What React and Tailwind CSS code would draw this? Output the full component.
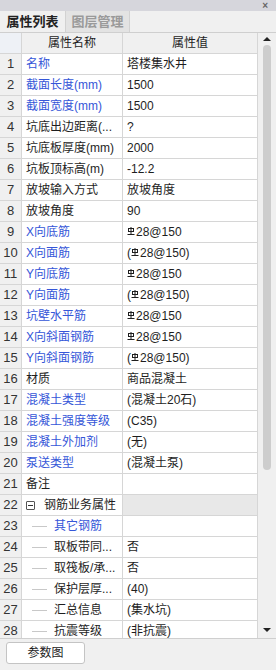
import React from 'react';

const BLUE = 'text-[#3556d8]';

// HRB400 rebar mark
const Rebar = () => (
  <svg width="8" height="8" viewBox="0 0 8 8" className="mb-[3px] mr-[1px] shrink-0">
    <rect x="1.5" y="1.5" width="5" height="3" fill="none" stroke="currentColor" strokeWidth="1" />
    <line x1="4" y1="0" x2="4" y2="7" stroke="currentColor" strokeWidth="1" />
    <line x1="0.5" y1="7.5" x2="7.5" y2="7.5" stroke="currentColor" strokeWidth="1" />
  </svg>
);

const bar = (wrap) => (
  <span className="flex items-center">
    {wrap && '('}
    <Rebar />28@150{wrap && ')'}
  </span>
);

const rows = [
  { name: '名称', value: '塔楼集水井', blue: true },
  { name: '截面长度(mm)', value: '1500', blue: true },
  { name: '截面宽度(mm)', value: '1500', blue: true },
  { name: '坑底出边距离(...', value: '?' },
  { name: '坑底板厚度(mm)', value: '2000' },
  { name: '坑板顶标高(m)', value: '-12.2' },
  { name: '放坡输入方式', value: '放坡角度' },
  { name: '放坡角度', value: '90' },
  { name: 'X向底筋', value: bar(false), blue: true },
  { name: 'X向面筋', value: bar(true), blue: true },
  { name: 'Y向底筋', value: bar(false), blue: true },
  { name: 'Y向面筋', value: bar(true), blue: true },
  { name: '坑壁水平筋', value: bar(false), blue: true },
  { name: 'X向斜面钢筋', value: bar(false), blue: true },
  { name: 'Y向斜面钢筋', value: bar(true), blue: true },
  { name: '材质', value: '商品混凝土' },
  { name: '混凝土类型', value: '(混凝土20石)', blue: true },
  { name: '混凝土强度等级', value: '(C35)', blue: true },
  { name: '混凝土外加剂', value: '(无)', blue: true },
  { name: '泵送类型', value: '(混凝土泵)', blue: true },
  { name: '备注', value: '' },
  { name: '钢筋业务属性', value: '', group: true },
  { name: '其它钢筋', value: '', child: true, blue: true },
  { name: '取板带同...', value: '否', child: true },
  { name: '取筏板/承...', value: '否', child: true },
  { name: '保护层厚...', value: '(40)', child: true },
  { name: '汇总信息', value: '(集水坑)', child: true },
  { name: '抗震等级', value: '(非抗震)', child: true },
];

export default function App() {
  return (
    <div
      className="w-[276px] h-[670px] bg-[#f0f0f0] flex flex-col overflow-hidden text-[12px] text-[#1e1e1e]"
      style={{ fontFamily: '"Liberation Sans", "Noto Sans CJK SC", sans-serif' }}
    >
      {/* title strip */}
      <div className="h-[11px] bg-[#d6d6dc] flex justify-end items-center pr-[8px]">
        <span className="text-[10px] leading-none text-[#666] font-bold">×</span>
      </div>

      {/* tabs */}
      <div className="h-[22px] flex border-b border-[#cfcfcf] bg-[#f0f0f0] text-[13px]">
        <div className="w-[65px] flex items-center justify-center font-bold text-[#222]">属性列表</div>
        <div className="w-[65px] flex items-center justify-center bg-[#e3e3e3] border-x border-[#d2d2d2] font-bold text-[#9a9a9a]">
          图层管理
        </div>
      </div>

      {/* grid */}
      <div className="flex h-[606px] bg-white border-b border-[#cfcfcf]">
        <div className="w-[258px] overflow-hidden">
          <div className="flex h-[21px] border-b border-[#d6d6d6] bg-[#f0f0f0]">
            <div className="w-[22px] bg-[#eef1f6] border-r border-[#d6d6d6]" />
            <div className="w-[101px] border-r border-[#d6d6d6] flex items-center justify-center">属性名称</div>
            <div className="flex-1 border-r border-[#d6d6d6] flex items-center justify-center">属性值</div>
          </div>
          {rows.map((r, i) => (
            <div key={i} className="flex h-[21px] border-b border-[#d6d6d6]">
              <div className="w-[22px] shrink-0 bg-[#f0f0f0] border-r border-[#d6d6d6] flex items-center justify-center text-[13px] text-[#333]">
                {i + 1}
              </div>
              <div
                className={`w-[101px] shrink-0 border-r border-[#d6d6d6] flex items-center whitespace-nowrap overflow-hidden ${
                  r.blue ? BLUE : ''
                } ${r.child ? 'pl-[10px]' : 'pl-[4px]'}`}
              >
                {r.group && (
                  <span className="w-[9px] h-[9px] border border-[#555] rounded-[1px] flex items-center justify-center mr-[9px]">
                    <span className="w-[5px] h-[1px] bg-[#333]" />
                  </span>
                )}
                {r.child && <span className="w-[15px] h-[1px] bg-[#c8c8c8] mr-[7px]" />}
                {r.name}
              </div>
              <div
                className={`flex-1 border-r border-[#d6d6d6] flex items-center pl-[4px] whitespace-nowrap overflow-hidden ${
                  r.group ? 'bg-[#e8e8e8]' : ''
                }`}
              >
                {r.value}
              </div>
            </div>
          ))}
        </div>

        {/* scrollbar */}
        <div className="w-[18px] bg-[#f0f0f0] flex flex-col items-center">
          <div className="h-[12px] flex items-center justify-center">
            <span className="w-0 h-0 border-x-[4px] border-x-transparent border-b-[4px] border-b-[#222]" />
          </div>
          <div className="w-[8px] h-[425px] bg-[#cdcdcd] rounded-full" />
          <div className="flex-1" />
          <div className="h-[16px] flex items-center justify-center">
            <span className="w-0 h-0 border-x-[4px] border-x-transparent border-t-[4px] border-t-[#222]" />
          </div>
        </div>
      </div>

      {/* footer */}
      <div className="flex-1 px-[6px] pt-[3px]">
        <button className="w-[79px] h-[22px] bg-white border border-[#c4c4c4] rounded-[3px] text-[12px] text-[#222]">参数图</button>
      </div>
    </div>
  );
}
